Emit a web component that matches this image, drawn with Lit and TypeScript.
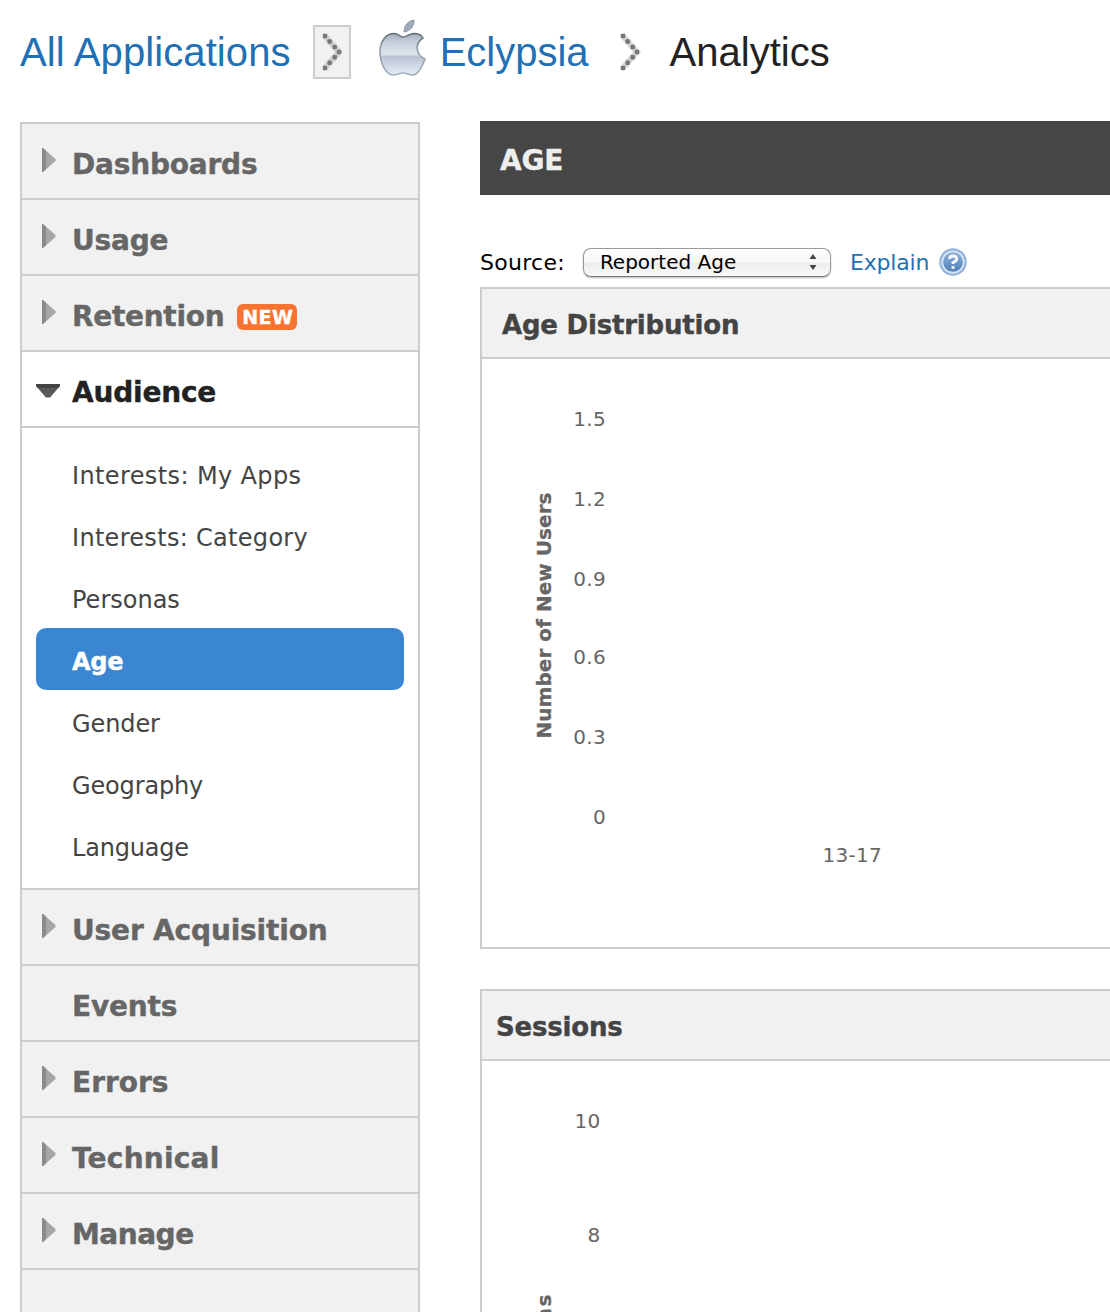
import { LitElement, html, css, svg, nothing } from "lit";
import { customElement, property } from "lit/decorators.js";
import { classMap } from "lit/directives/class-map.js";
import { styleMap } from "lit/directives/style-map.js";

interface Section {
  label: string;
  arrow?: boolean;
  open?: boolean;
  badge?: string;
  track?: number;
  items?: { label: string; track?: number; active?: boolean }[];
}

const SECTIONS: Section[] = [
  { label: "Dashboards", arrow: true, track: -0.2 },
  { label: "Usage", arrow: true, track: -0.2 },
  { label: "Retention", arrow: true, badge: "NEW", track: -0.3 },
  {
    label: "Audience",
    arrow: true,
    open: true,
    track: -0.2,
    items: [
      { label: "Interests: My Apps", track: 0.38 },
      { label: "Interests: Category", track: 0.3 },
      { label: "Personas", track: 0 },
      { label: "Age", active: true, track: -0.2 },
      { label: "Gender", track: -0.1 },
      { label: "Geography", track: -0.15 },
      { label: "Language", track: -0.2 },
    ],
  },
  { label: "User Acquisition", arrow: true, track: -0.17 },
  { label: "Events", track: -0.2 },
  { label: "Errors", arrow: true, track: 0 },
  { label: "Technical", arrow: true, track: 0.22 },
  { label: "Manage", arrow: true, track: -0.5 },
  { label: "" },
];

const spacing = (track = 0) => styleMap({ letterSpacing: `${track}px` });

/* Stepped dots that form the breadcrumb chevron. */
const DOTS = [[2, 3], [6.7, 8.5], [11.7, 14], [16, 19], [11.7, 24.3], [6.7, 29.7], [2, 35]];

@customElement("chevron-icon")
class ChevronIcon extends LitElement {
  static styles = css`
    :host { display: block; width: 18px; height: 38px; }
    svg { display: block; overflow: visible; }
  `;
  render() {
    return html`<svg width="18" height="38" viewBox="0 0 18 38">
      <path d="M2 3 L16 19 L2 35" fill="none" stroke="#bbb" stroke-opacity=".6" stroke-width="6" />
      ${DOTS.map(([x, y]) => svg`<rect x=${x - 2.2} y=${y - 2.2} width="4.4" height="4.4" rx="1" fill="#777"/>`)}
    </svg>`;
  }
}

@customElement("side-nav")
class SideNav extends LitElement {
  static styles = css`
    :host { display: block; width: 400px; box-sizing: border-box; border: 2px solid #ccc; border-bottom: 0; }
    .row { display: flex; align-items: center; box-sizing: border-box; height: 76px; padding: 7px 0 0 14px;
      border-bottom: 2px solid #ccc; background: #f1f1f1; color: #666; font-size: 28px; font-weight: bold;
      -webkit-text-stroke: 0.4px currentColor; }
    .row.open { background: #fff; color: #222; }
    .mark { width: 24px; height: 24px; margin: -9px 12px 0 0; overflow: visible; }
    .badge { display: flex; align-items: center; justify-content: center; box-sizing: border-box; width: 60px; height: 26px; margin: 0 0 0 13px;
      padding-left: 1px; border-radius: 6px; background: #f77331; color: #fff; font-size: 19px; line-height: 26px; letter-spacing: 0.4px; }
    .list { padding: 14px 14px 12px; background: #fff; border-bottom: 2px solid #ccc; }
    .item { display: flex; align-items: center; box-sizing: border-box; height: 62px; padding: 5px 0 0 36px; font-size: 24px; color: #444; }
    .item.active { border-radius: 10px; background: #3b86d2; color: #fff; font-weight: bold; -webkit-text-stroke: 0.4px currentColor; }
  `;
  mark(s: Section) {
    if (!s.arrow) return nothing;
    return s.open
      ? svg`<path d="M0 8H24V10L14 21.5H10L0 10Z" fill="#5a5a5a"/><path d="M0 8H24V10L22 12H2L0 10Z" fill="#444"/>`
      : svg`<path d="M6 0H7L19.5 11V13L7 24H6Z" fill="#a6a6a6"/><path d="M6 0H7L10 3V21L7 24H6Z" fill="#8a8a8a"/>`;
  }
  render() {
    return SECTIONS.map(
      (s) => html`
        <div class=${classMap({ row: true, open: !!s.open })}>
          <svg class="mark" viewBox="0 0 24 24">${this.mark(s)}</svg>
          <span style=${spacing(s.track)}>${s.label}</span>
          ${s.badge ? html`<span class="badge">${s.badge}</span>` : nothing}
        </div>
        ${s.items
          ? html`<div class="list">
              ${s.items.map(
                (i) => html`<div class=${classMap({ item: true, active: !!i.active })}>
                  <span style=${spacing(i.track)}>${i.label}</span>
                </div>`
              )}
            </div>`
          : nothing}
      `
    );
  }
}

interface Tick { text: string; x: number; y: number; }

@customElement("chart-panel")
class ChartPanel extends LitElement {
  @property() heading = "";
  @property() axis = "";
  @property({ type: Number }) indent = 20;
  @property({ type: Number }) axisEnd = 0;
  @property({ type: Number }) axisLength = 0;
  @property({ attribute: false }) ticks: Tick[] = [];
  static styles = css`
    :host { display: block; border: 2px solid #ccc; border-right: 0; background: #fff; }
    .head { display: flex; align-items: center; box-sizing: border-box; height: 70px; padding-top: 3px;
      border-bottom: 2px solid #ccc; background: #f1f1f1; color: #444; font-size: 26px; font-weight: bold; letter-spacing: -0.2px;
      -webkit-text-stroke: 0.4px currentColor; }
    .plot { display: block; width: 628px; height: 588px; }
    .tick { font-size: 20px; fill: #666; letter-spacing: 0.3px; }
    .axis { font-size: 20px; font-weight: bold; fill: #666; stroke: #666; stroke-width: 0.3px; }
  `;
  render() {
    return html`
      <div class="head"><span style=${styleMap({ marginLeft: `${this.indent}px` })}>${this.heading}</span></div>
      <svg class="plot">
        <text class="axis" transform="translate(68.5 ${this.axisEnd}) rotate(-90)" textLength=${this.axisLength}>${this.axis}</text>
        ${this.ticks.map((t) => svg`<text class="tick" text-anchor="end" x=${t.x} y=${t.y}>${t.text}</text>`)}
      </svg>
    `;
  }
}

@customElement("app-root")
class AppRoot extends LitElement {
  static styles = css`
    :host { display: block; width: 1110px; height: 1312px; overflow: hidden; background: #fff;
      font-family: "DejaVu Sans", Verdana, sans-serif; }
    .crumbs { display: flex; align-items: center; box-sizing: border-box; height: 122px; padding: 0 0 18px 20px;
      font-family: "Liberation Sans", Arial, sans-serif; font-size: 40px; color: #222; }
    .link { color: #1f70b4; }
    .all { letter-spacing: 0.1px; }
    .box { display: flex; align-items: center; justify-content: center; box-sizing: border-box; width: 38px; height: 54px;
      margin: 0 28px 0 22px; border: 2px solid #ccc; background: #f1f1f1; }
    .apple { width: 48px; height: 58px; margin: -8px 13px 0 0; }
    .sep { margin: 0 31px 0 32px; }
    .body { display: flex; align-items: flex-start; gap: 60px; padding-left: 20px; }
    .main { flex: 1; margin-top: -1px; }
    .title { display: flex; align-items: center; height: 74px; padding: 4px 0 0 20px; box-sizing: border-box; background: #464646;
      color: #eee; font-size: 28px; font-weight: bold; letter-spacing: -0.2px; -webkit-text-stroke: 0.4px currentColor; }
    .source { display: flex; align-items: center; height: 32px; margin: 51px 0 9px; font-size: 22px; color: #000; }
    .label { letter-spacing: 0.27px; }
    .select { display: flex; align-items: center; justify-content: space-between; box-sizing: border-box; width: 248px; height: 29px;
      margin: 0 19px 0 18px; padding: 0 12px 0 16px; border: 1px solid #999; border-bottom-color: #777; border-radius: 8px;
      background: linear-gradient(#fff, #f6f6f6 50%, #ececec 51%, #fafafa); box-shadow: 0 1px 2px #0004; font-size: 20px; }
    .explain { letter-spacing: -0.15px; }
    .help { width: 28px; height: 28px; margin-left: 10px; }
    .sessions { margin-top: 40px; }
  `;
  render() {
    return html`
      <div class="crumbs">
        <span class="link all">All Applications</span>
        <span class="box"><chevron-icon></chevron-icon></span>
        <svg class="apple" viewBox="0 0 48 58">
          <defs>
            <linearGradient id="body" x2="0" y2="1">
              <stop offset="0" stop-color="#a3aebd" /><stop offset=".22" stop-color="#c9d1dc" /><stop offset=".5" stop-color="#dde3eb" />
              <stop offset=".56" stop-color="#b9c4d3" /><stop offset="1" stop-color="#e6edf8" />
            </linearGradient>
            <linearGradient id="edge" x2="0" y2="1">
              <stop offset="0" stop-color="#5f6a78" /><stop offset=".3" stop-color="#8e99a8" /><stop offset="1" stop-color="#a3aebd" />
            </linearGradient>
          </defs>
          <path d="M25 13C25 6 29 2 35 1C35 7 32 12 25 13Z" fill="#9dabba" stroke="#7f8c9b" stroke-width=".8" />
          <path d="M24 18C28 18 30 14.500 35 14.500C40 14.500 43 17 44 19C35 25 37 36 46 40C43 48 39 56 34 56C30 56 28 54 24 54C20 54 18 56 14 56C7 56 1 44 1 33C1 21 8 14.500 15 14.500C19 14.500 21 18 24 18Z"
            fill="url(#body)" stroke="url(#edge)" stroke-width="1.600" />
        </svg>
        <span class="link">Eclypsia</span>
        <chevron-icon class="sep"></chevron-icon>
        <span>Analytics</span>
      </div>
      <div class="body">
        <side-nav></side-nav>
        <div class="main">
          <div class="title">AGE</div>
          <div class="source">
            <span class="label">Source:</span>
            <span class="select"><span>Reported Age</span>
              <svg width="10" height="18"><path d="M1.500 6L5 1L8.500 6ZM1.500 12L5 17L8.500 12Z" fill="#444" /></svg></span>
            <span class="link explain">Explain</span>
            <svg class="help" viewBox="0 0 28 28">
              <defs><linearGradient id="disc" x2="0" y2="1">
                <stop offset="0" stop-color="#8fb0d8" /><stop offset="1" stop-color="#5080bb" />
              </linearGradient></defs>
              <circle cx="14" cy="14" r="12.700" fill="#d6e4f3" stroke="#93b4dc" stroke-width="2.200" />
              <circle cx="14" cy="14" r="9.800" fill="url(#disc)" />
              <path d="M10.500 11Q10.500 8 14 8Q17.700 8 17.700 11Q17.700 13 14 14.500V16M14 18V21" fill="none" stroke="#f4f8fc" stroke-width="2.800" />
            </svg>
          </div>
          <chart-panel heading="Age Distribution" axis="Number of New Users" .axisEnd=${379.5} .axisLength=${246}
            .ticks=${[
              { text: "1.5", x: 124, y: 67 },
              { text: "1.2", x: 124, y: 147 },
              { text: "0.9", x: 124, y: 227 },
              { text: "0.6", x: 124, y: 305 },
              { text: "0.3", x: 124, y: 385 },
              { text: "0", x: 124, y: 465 },
              { text: "13-17", x: 400, y: 503 },
            ]}></chart-panel>
          <chart-panel class="sessions" heading="Sessions" axis="Sessions" .indent=${14} .axisEnd=${344.5} .axisLength=${111}
            .ticks=${[
              { text: "10", x: 118.5, y: 67 },
              { text: "8", x: 118.5, y: 181 },
            ]}></chart-panel>
        </div>
      </div>
    `;
  }
}
